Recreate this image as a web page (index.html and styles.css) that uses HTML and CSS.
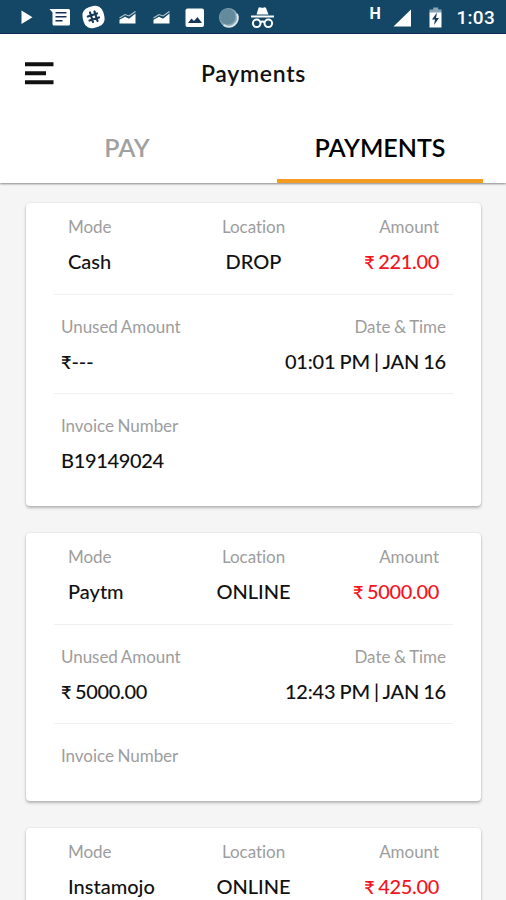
FILE: index.html
```html
<!DOCTYPE html>
<html lang="en">
<head>
<meta charset="utf-8">
<title>Payments</title>
<link rel="stylesheet" href="styles.css">
</head>
<body>
<div class="status">
  <svg class="status-icons" width="506" height="34" viewBox="0 0 506 34" aria-hidden="true">
    <path fill="#fff" d="M21.500 10.500L32.500 17.200L21.500 24z"/>
    <path fill="#fff" d="M49.500 9H68.500Q70 9 70 10.500V24Q70 25.500 68.500 25.500H54Q52.500 25.500 52.500 24V12.500z"/>
    <path stroke="#1b2f5c" stroke-width="1.500" d="M55.500 12.700H66.500M55.500 16.700H66.500M55.500 20.700H62.500"/>
    <rect x="82.800" y="6.300" width="21.400" height="21.400" rx="8.500" fill="#fff" transform="rotate(-14 93.500 17)"/>
    <path stroke="#16395a" stroke-width="2.200" stroke-linecap="round" fill="none" d="M90 12.500L93 22M94.500 11.500L97.500 21M87.800 16.500L97 13.500M89.500 20.500L99 17.500"/>
    <g id="chart"><path fill="#fff" d="M119.500 19.800L125 16.800L129 18.700L135.500 13.500V23.500H119.500z"/>
    <path stroke="#b5c7d2" stroke-width="1.100" fill="none" d="M119.500 18L125 14.500L129 16L135.500 11.500"/></g>
    <use href="#chart" x="34"/>
    <rect x="185.500" y="8.500" width="18.500" height="18.500" rx="2" fill="#fff"/>
    <path fill="#173659" d="M188 23L191.500 18.500L194 21L197.500 17L202 23z"/>
    <circle cx="228.500" cy="17.500" r="9.500" fill="#8eaab7"/>
    <circle cx="227.500" cy="16.500" r="8" fill="#648b9d"/>
    <path stroke="#dbe7eb" stroke-width="2" fill="none" d="M237 14A9 9 0 0 1 223.500 25"/>
    <path fill="#fff" d="M256.500 14.500L258.500 8Q259 7 260.500 7.500Q262 8.200 264 7.500Q265.500 7 266 8L268.500 14.500z"/>
    <path stroke="#fff" stroke-width="2" d="M251 16.500H274"/>
    <g fill="none" stroke="#fff" stroke-width="2"><circle cx="256.700" cy="23.300" r="3.800"/><circle cx="268.300" cy="23.300" r="3.800"/><path d="M260 22.500Q262.500 20.500 265 22.500"/></g>
    <path fill="#fff" d="M411 9.500V26.500H393.500z"/>
    <path fill="#8aa6b5" d="M433.200 7.500H438.200V9.500H441.500V13H429.500V9.500H433.200z"/>
    <path fill="#fff" d="M429.500 12.500H441.500V27.500H429.500z"/>
    <path fill="#143b5c" d="M437 12.500L432 19.500H435L434 25L439 18H436z"/>
  </svg>
  <span class="net">H</span>
  <span class="clock">1:03</span>
</div>
<header class="top">
  <div class="bar">
    <svg class="menu" width="29" height="24" viewBox="0 0 29 24" aria-label="Menu"><path stroke="#111" stroke-width="4" d="M0 2.300H28.500M0 11.200H21M0 20.300H28.500"/></svg>
    <h1 class="title">Payments</h1>
  </div>
  <nav class="tabs">
    <span class="tab">PAY</span>
    <span class="tab active">PAYMENTS</span>
  </nav>
</header>
<main class="list">
  <article class="card">
    <section class="row three">
      <div><p class="label">Mode</p><p class="value">Cash</p></div>
      <div><p class="label">Location</p><p class="value">DROP</p></div>
      <div><p class="label">Amount</p><p class="value num red"><span class="rupee">₹</span> 221.00</p></div>
    </section>
    <section class="row">
      <div><p class="label">Unused Amount</p><p class="value"><span class="rupee">₹</span>---</p></div>
      <div><p class="label">Date &amp; Time</p><p class="value date">01:01 PM | JAN 16</p></div>
    </section>
    <section class="row">
      <div><p class="label">Invoice Number</p><p class="value num">B19149024</p></div>
    </section>
  </article>
  <article class="card">
    <section class="row three">
      <div><p class="label">Mode</p><p class="value">Paytm</p></div>
      <div><p class="label">Location</p><p class="value">ONLINE</p></div>
      <div><p class="label">Amount</p><p class="value num red"><span class="rupee">₹</span> 5000.00</p></div>
    </section>
    <section class="row">
      <div><p class="label">Unused Amount</p><p class="value num"><span class="rupee">₹</span> 5000.00</p></div>
      <div><p class="label">Date &amp; Time</p><p class="value date">12:43 PM | JAN 16</p></div>
    </section>
    <section class="row">
      <div><p class="label">Invoice Number</p></div>
    </section>
  </article>
  <article class="card">
    <section class="row three">
      <div><p class="label">Mode</p><p class="value">Instamojo</p></div>
      <div><p class="label">Location</p><p class="value">ONLINE</p></div>
      <div><p class="label">Amount</p><p class="value num red"><span class="rupee">₹</span> 425.00</p></div>
    </section>
  </article>
</main>
</body>
</html>
```
FILE: styles.css
```css
* { box-sizing: border-box; }
body {
  display: flex;
  flex-direction: column;
  margin: 0;
  height: 900px;
  overflow: hidden;
  background: #f5f5f5;
  color: #111;
  font-family: Lato, "Liberation Sans", sans-serif;
  font-variant-ligatures: none;
}
h1, p { margin: 0; }
.status {
  position: relative;
  display: flex;
  flex: none;
  justify-content: flex-end;
  height: 34px;
  padding-right: 11px;
  background: #144766;
  border-bottom: 1px solid #17265a;
  color: #fff;
  font-family: Roboto, sans-serif;
}
.status-icons { position: absolute; left: 0; top: 0; }
.net { width: 87px; font-size: 16px; font-weight: 700; line-height: 27px; }
.clock { font-size: 19px; font-weight: 500; line-height: 36px; letter-spacing: 0.3px; }
.top {
  position: relative;
  flex: none;
  height: 149px;
  background: #fff;
  box-shadow: 0 1px 2px rgba(0, 0, 0, 0.45);
}
.bar {
  display: grid;
  grid-template-columns: 40px 1fr 40px;
  align-items: center;
  height: 79px;
  padding: 0 24px 0 25px;
}
.title { font-size: 23px; font-weight: 600; line-height: 28px; letter-spacing: 0.7px; padding-bottom: 1px; text-align: center; }
.tabs { display: grid; grid-template-columns: 206px 206px; justify-content: space-between; height: 70px; padding: 0 23px 0 24px; }
.tab { height: 70px; color: #a0a0a0; font-size: 25px; font-weight: 600; line-height: 69px; text-align: center; }
.tab.active { color: #000; border-bottom: 4px solid #f39c1f; }
.list { display: flex; flex: 1; flex-direction: column; gap: 27px; min-height: 0; overflow: hidden; padding: 20px 25px 0 26px; }
.card {
  flex: none;
  padding: 12px 28px 33px;
  background: #fff;
  border-radius: 4px;
  box-shadow: 0 2px 3px rgba(0, 0, 0, 0.25), 0 0 2px rgba(0, 0, 0, 0.12);
}
.row { display: flex; justify-content: space-between; padding: 20px 7px 20px; border-bottom: 1px solid #f0f0f0; }
.row:last-child { border-bottom: 0; padding-bottom: 0; }
.row.three { display: grid; grid-template-columns: 1fr 1fr 1fr; padding: 0 14px 21px; }
.row > div:last-child:not(:first-child) { text-align: right; }
.row.three > div:nth-child(2) { text-align: center; }
.label { color: #9d9d9d; font-size: 17px; line-height: 24px; letter-spacing: -0.04px; word-spacing: -0.7px; }
.value { margin-top: 10px; font-size: 20px; font-weight: 500; line-height: 24px; white-space: nowrap; }
.row:last-child .value { margin-bottom: 1px; }
.num { letter-spacing: -0.33px; word-spacing: -0.8px; }
.date { letter-spacing: -0.2px; word-spacing: -0.7px; }
.rupee { font-size: 18px; font-weight: 600; line-height: 1; }
.red { color: #f5141e; }
```
